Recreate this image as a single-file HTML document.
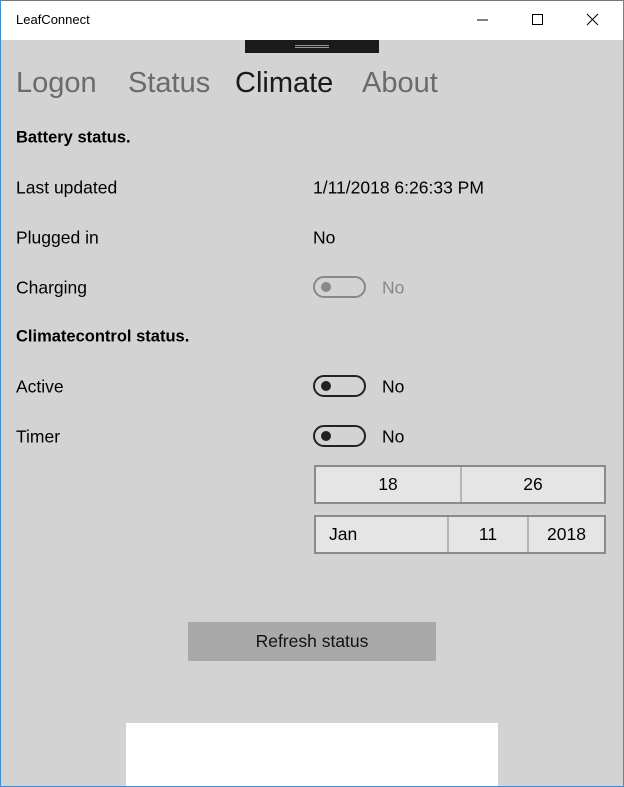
<!DOCTYPE html>
<html><head><meta charset="utf-8"><style>
*{margin:0;padding:0;box-sizing:border-box}
body{width:624px;height:787px;position:relative;overflow:hidden;background:#d3d3d3;font-family:"Liberation Sans",sans-serif;color:#000}
.frame{position:absolute;inset:0;border:1px solid #3c8fd8;border-top-color:#777;pointer-events:none;z-index:9}
.title{position:absolute;left:0;top:0;width:624px;height:40px;background:#fff}
.title .t{position:absolute;left:16px;top:12px;font-size:13px}
.a{position:absolute;white-space:nowrap}
.nav{font-size:29px;top:67px;color:#6b6b6b}
.r{font-size:17.5px;transform:translateY(-50%)}
.b{font-weight:bold;font-size:16.5px}
.tog{position:absolute;left:313px;width:53px;height:22px;border:2px solid #222;border-radius:11px}
.tog:after{content:"";position:absolute;left:6px;top:4px;width:10px;height:10px;border-radius:50%;background:#222}
.tog.d{border-color:#888}.tog.d:after{background:#888}
.box{position:absolute;left:314px;width:292px;height:39px;border:2px solid #8a8a8a;background:#e5e5e5;display:flex;font-size:17.5px}
.box div{display:flex;align-items:center;justify-content:center;border-right:2px solid #b5b5b5}
.box div:last-child{border-right:none}
</style></head><body>
<div class="title"><span class="t">LeafConnect</span>
<svg style="position:absolute;left:470px;top:12px" width="140" height="16">
<line x1="7" y1="8" x2="18" y2="8" stroke="#000" stroke-width="1"/>
<rect x="62.5" y="2.5" width="10" height="10" fill="none" stroke="#000"/>
<path d="M117 2L128 13M128 2L117 13" stroke="#000" stroke-width="1"/>
</svg></div>
<div style="position:absolute;left:245px;top:40px;width:134px;height:13px;background:#1b1b1b"><div style="position:absolute;left:50px;top:5px;width:34px;height:3px;border-top:1px solid #999;border-bottom:1px solid #999"></div></div>
<div class="a nav" style="left:16px">Logon</div>
<div class="a nav" style="left:128px">Status</div>
<div class="a nav" style="left:235px;color:#1a1a1a">Climate</div>
<div class="a nav" style="left:362px">About</div>
<div class="a r b" style="left:16px;top:138px">Battery status.</div>
<div class="a r" style="left:16px;top:188px">Last updated</div>
<div class="a r" style="left:313px;top:188px">1/11/2018 6:26:33 PM</div>
<div class="a r" style="left:16px;top:238px">Plugged in</div>
<div class="a r" style="left:313px;top:238px">No</div>
<div class="a r" style="left:16px;top:288px">Charging</div>
<div class="tog d" style="top:276px"></div>
<div class="a r" style="left:382px;top:288px;color:#888">No</div>
<div class="a r b" style="left:16px;top:337px">Climatecontrol status.</div>
<div class="a r" style="left:16px;top:387px">Active</div>
<div class="tog" style="top:375px"></div>
<div class="a r" style="left:382px;top:387px">No</div>
<div class="a r" style="left:16px;top:437px">Timer</div>
<div class="tog" style="top:425px"></div>
<div class="a r" style="left:382px;top:437px">No</div>
<div class="box" style="top:465px"><div style="width:146px">18</div><div style="flex:1">26</div></div>
<div class="box" style="top:515px"><div style="width:133px;justify-content:flex-start;padding-left:13px">Jan</div><div style="width:80px">11</div><div style="flex:1">2018</div></div>
<div style="position:absolute;left:188px;top:622px;width:248px;height:39px;background:#a9a9a9;display:flex;align-items:center;justify-content:center;font-size:17.5px;color:#111">Refresh status</div>
<div style="position:absolute;left:126px;top:723px;width:372px;height:64px;background:#fff"></div>
<div class="frame"></div>
</body></html>
